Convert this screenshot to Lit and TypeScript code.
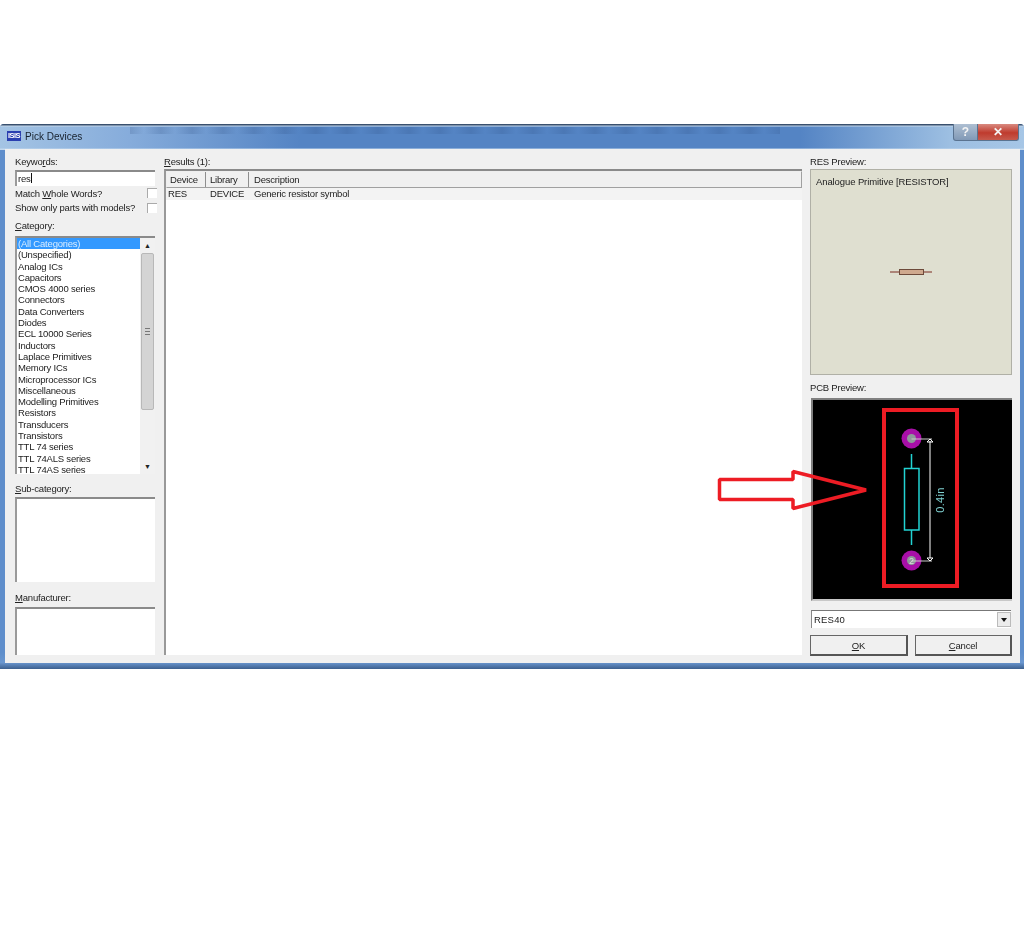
import { LitElement, html, css, svg } from "lit";
import { customElement } from "lit/decorators.js";

const CATEGORIES = ["(Unspecified)","Analog ICs","Capacitors","CMOS 4000 series","Connectors","Data Converters","Diodes","ECL 10000 Series","Inductors","Laplace Primitives","Memory ICs","Microprocessor ICs","Miscellaneous","Modelling Primitives","Resistors","Transducers","Transistors","TTL 74 series","TTL 74ALS series","TTL 74AS series"];

@customElement("app-root")
export class AppRoot extends LitElement {
  static styles = css`
    :host { display: block; width: 1024px; height: 945px; background: #fff; overflow: hidden; font-family: "Liberation Sans", Arial, sans-serif; font-size: 9.5px; letter-spacing: -.2px; color: #222; }
    .top { height: 124px; }
    .win { position: relative; height: 545px; display: flex; flex-direction: column; border-radius: 4px 4px 0 0; background: linear-gradient(180deg,#5f8ecb 0,#5f8ecb 97%,#6a97d0 98.800%,#3c5f8e 100%); filter: blur(.35px); }
    .title { height: 26px; flex: none; box-sizing: border-box; display: flex; align-items: center; padding: 0 6px 2px 7px; gap: 4px; font-size: 10px; letter-spacing: 0; color: #16202c; border-radius: 4px 4px 0 0; background:
      linear-gradient(180deg,#39506e 0,#39506e 1px,#c6d8ea 2px,transparent 3px,transparent 24px,#c2d8ee 25px,#c2d8ee 26px),
      repeating-linear-gradient(90deg,rgba(40,70,120,.2),rgba(40,70,120,0) 14px,rgba(40,70,120,.2) 31px) 130px 3px / 650px 7px no-repeat,
      linear-gradient(90deg,#a4c4e4 0,#86acdb 130px,#5484c4 300px,#5484c4 800px,#9dbfe2 950px,#a6c6e6 1024px); }
    .logo { width: 14px; height: 10px; background: #2a3fb0; color: #fff; font-size: 7.5px; font-weight: bold; line-height: 10px; text-align: center; letter-spacing: -.5px; }
    .grow { flex: 1; }
    .caps { display: flex; align-self: flex-start; height: 17px; margin-right: -1px; }
    .cap { display: flex; align-items: center; justify-content: center; color: #f4f4f4; font-weight: bold; border: 1px solid #5a7390; border-top: 0; }
    .help { width: 23px; font-size: 12px; border-radius: 0 0 0 3px; background: linear-gradient(180deg,#aebfd2,#8199b6); }
    .close { width: 40px; font-size: 12px; border-left: 0; border-radius: 0 0 3px 0; background: linear-gradient(180deg,#d98a80,#bf3b2e 55%,#c65a4d); }
    .body { flex: 1; margin: -1px 4px 6px 5px; background: #f0f0f0; display: grid; grid-template-columns: 140px 639px 202px; column-gap: 8px; padding: 5px 7px 8px 10px; min-height: 0; }
    .col { display: flex; flex-direction: column; min-height: 0; }
    .mid { margin-left: 1px; }
    .lab { height: 14px; line-height: 13px; white-space: nowrap; flex: none; padding-top: 1px; box-sizing: border-box; }
    .lab u { text-decoration-thickness: 1px; }
    .sunk { border-top: 2px solid #8a8a8a; border-left: 2px solid #9a9a9a; background: #fff; box-sizing: border-box; }
    .kw { height: 16px; line-height: 14px; padding-left: 1px; flex: none; margin-top: 2px; }
    .caret { display: inline-block; width: 1px; height: 10px; background: #111; vertical-align: -1px; }
    .chk { height: 14.5px; flex: none; display: flex; align-items: center; justify-content: space-between; white-space: nowrap; }
    .box { width: 10px; height: 10px; margin-right: -2px; background: #fff; border-top: 1px solid #aaa; border-left: 1px solid #aaa; box-sizing: border-box; }
    .cat { margin-top: 3px; }
    .list { height: 238px; flex: none; display: flex; overflow: hidden; margin-top: 4px; }
    .items { flex: 1; overflow: hidden; min-width: 0; }
    .items div { height: 11.3px; line-height: 11.3px; padding-left: 1px; white-space: nowrap; }
    .items .sel { background: #3399ff; color: #d8ecff; }
    .sb { width: 15px; flex: none; background: #f1f1f1; display: flex; flex-direction: column; align-items: center; }
    .arr { height: 15px; flex: none; font-size: 7px; line-height: 15px; color: #222; letter-spacing: 0; }
    .thumb { width: 13px; height: 157px; flex: none; box-sizing: border-box; background: #d4d4d4; border: 1px solid #b8b8b8; border-radius: 2px; display: flex; align-items: center; justify-content: center; }
    .grip { width: 5px; height: 5px; border-top: 1px solid #777; border-bottom: 1px solid #777; }
    .grip::after { content: ""; display: block; height: 1px; margin-top: 2px; background: #777; }
    .sbsp { flex: 1; }
    .sub { margin-top: 7px; }
    .b1 { height: 85px; margin-top: 2px; flex: none; }
    .man { margin-top: 8px; }
    .b2 { flex: 1; margin-top: 3px; }
    .res { border-top: 2px solid #8a8a8a; border-left: 2px solid #999; flex: 1; background: #fff; margin-top: 1px; min-height: 0; }
    .hdr { display: flex; height: 17px; box-sizing: border-box; background: #f0f0f0; border: 1px solid #a0a0a0; border-top-color: #eee; border-left-color: #eee; line-height: 15px; }
    .hdr div { box-sizing: border-box; padding-left: 4px; border-right: 1px solid #8e8e8e; }
    .hdr .h1 { width: 39px; padding-left: 3px; } .hdr .h2 { width: 43px; }
    .hdr div:last-child { border-right: 0; flex: 1; padding-left: 5px; }
    .row { display: flex; height: 12px; line-height: 12px; background: #f3f3f3; }
    .row div { padding-left: 2px; box-sizing: border-box; }
    .w1 { width: 42px; } .w2 { width: 44px; }
    .rp { height: 206px; flex: none; margin-top: 1px; background: #dfdfd0; border: 1px solid #b0b0a6; box-sizing: border-box; padding: 6px 5px 5px; display: flex; flex-direction: column; letter-spacing: -.1px; }
    .rp .sym { flex: 1; display: flex; align-items: center; justify-content: center; padding-bottom: 12px; padding-right: 1px; }
    .rp svg { display: block; }
    .pcbl { margin-top: 5px; }
    .pcb { height: 203px; flex: none; background: #000; border: 2px solid #808080; border-right: 0; border-bottom-color: #c8c8c8; box-sizing: border-box; margin: 4px 0 0 1px; }
    .combo { height: 18px; flex: none; margin: 9px 1px 0 1px; display: flex; align-items: center; justify-content: space-between; background: #fff; border-top: 1px solid #777; border-left: 1px solid #888; box-sizing: border-box; padding-left: 2px; letter-spacing: .2px; }
    .dd { width: 14px; height: 15px; background: #ececec; border: 1px solid #bbb; box-sizing: border-box; display: flex; align-items: center; justify-content: center; }
    .dd i { border: 3.5px solid transparent; border-top: 4px solid #111; border-bottom: 0; }
    .btns { display: grid; grid-template-columns: 98px 97px; column-gap: 7px; margin-top: 7px; }
    .btn { height: 21px; box-sizing: border-box; display: flex; align-items: center; justify-content: center; background: #f0f0f0; border: 1px solid #666; border-right: 2px solid #555; border-bottom: 2px solid #555; }
    .ov { position: absolute; left: 0; top: -124px; width: 1024px; height: 945px; pointer-events: none; }
  `;

  private overlay() {
    return svg`
      <rect x="884" y="410" width="73" height="176" fill="none" stroke="#ed1c24" stroke-width="4"/>
      <path d="M719.500 479.500H793V471.500L866 490L793 508.500V499.500H719.500Z" fill="none" stroke="#ed1c24" stroke-width="3.500" stroke-linejoin="bevel"/>
      <circle cx="911.500" cy="438.500" r="10" fill="#a80fa8"/><circle cx="911.500" cy="560.500" r="10" fill="#a80fa8"/>
      <circle cx="911.500" cy="438.500" r="4.500" fill="#8f9a9a"/><circle cx="911.500" cy="560.500" r="4.500" fill="#8f9a9a"/>
      <path d="M911.500 439H932M911.500 561H932" stroke="#c8c8c8" stroke-width="1"/>
      <path d="M930 441V558" stroke="#fff" stroke-width="1"/>
      <path d="M930 439L927 442H933ZM930 561L927 558H933Z" fill="none" stroke="#fff" stroke-width="1"/>
      <path d="M911.500 454V468M911.500 530V545" stroke="#22d3d3" stroke-width="1.500"/>
      <rect x="904.500" y="468.500" width="14.500" height="61.500" fill="none" stroke="#22d3d3" stroke-width="1.500"/>
      <text x="944" y="500" transform="rotate(-90 944 500)" text-anchor="middle" font-size="11" font-family="Liberation Sans" letter-spacing=".3" fill="#7fd0d0">0.4in</text>
      <text x="911.500" y="564" text-anchor="middle" font-size="9" letter-spacing="0" font-family="Liberation Sans" fill="#ddd">2</text>
    `;
  }

  render() {
    return html`
      <div class="top"></div>
      <div class="win">
        <div class="title">
          <div class="logo">ISIS</div><span>Pick Devices</span><div class="grow"></div>
          <div class="caps"><div class="cap help">?</div><div class="cap close">✕</div></div>
        </div>
        <div class="body">
          <div class="col">
            <div class="lab">Keywo<u>r</u>ds:</div>
            <div class="sunk kw">res<span class="caret"></span></div>
            <div class="chk"><span>Match <u>W</u>hole Words?</span><span class="box"></span></div>
            <div class="chk"><span>Show only parts with models?</span><span class="box"></span></div>
            <div class="lab cat"><u>C</u>ategory:</div>
            <div class="sunk list">
              <div class="items"><div class="sel">(All Categories)</div>${CATEGORIES.map((c) => html`<div>${c}</div>`)}</div>
              <div class="sb"><div class="arr">▲</div><div class="thumb"><div class="grip"></div></div><div class="sbsp"></div><div class="arr">▼</div></div>
            </div>
            <div class="lab sub"><u>S</u>ub-category:</div>
            <div class="sunk b1"></div>
            <div class="lab man"><u>M</u>anufacturer:</div>
            <div class="sunk b2"></div>
          </div>
          <div class="col mid">
            <div class="lab"><u>R</u>esults (1):</div>
            <div class="res">
              <div class="hdr"><div class="h1">Device</div><div class="h2">Library</div><div>Description</div></div>
              <div class="row"><div class="w1">RES</div><div class="w2">DEVICE</div><div>Generic resistor symbol</div></div>
            </div>
          </div>
          <div class="col">
            <div class="lab">RES Preview:</div>
            <div class="rp">
              <div>Analogue Primitive [RESISTOR]</div>
              <div class="sym"><svg width="42" height="10" viewBox="0 0 42 10"><path d="M0 5H9M33 5H42" stroke="#7a2a20"/><rect x="9.500" y="2.500" width="24" height="5" fill="#cfa98e" stroke="#6d4a3a"/></svg></div>
            </div>
            <div class="lab pcbl">PCB Preview:</div>
            <div class="pcb"></div>
            <div class="combo"><span>RES40</span><div class="dd"><i></i></div></div>
            <div class="btns"><div class="btn"><span><u>O</u>K</span></div><div class="btn"><span><u>C</u>ancel</span></div></div>
          </div>
        </div>
        <svg class="ov" viewBox="0 0 1024 945">${this.overlay()}</svg>
      </div>
    `;
  }
}
